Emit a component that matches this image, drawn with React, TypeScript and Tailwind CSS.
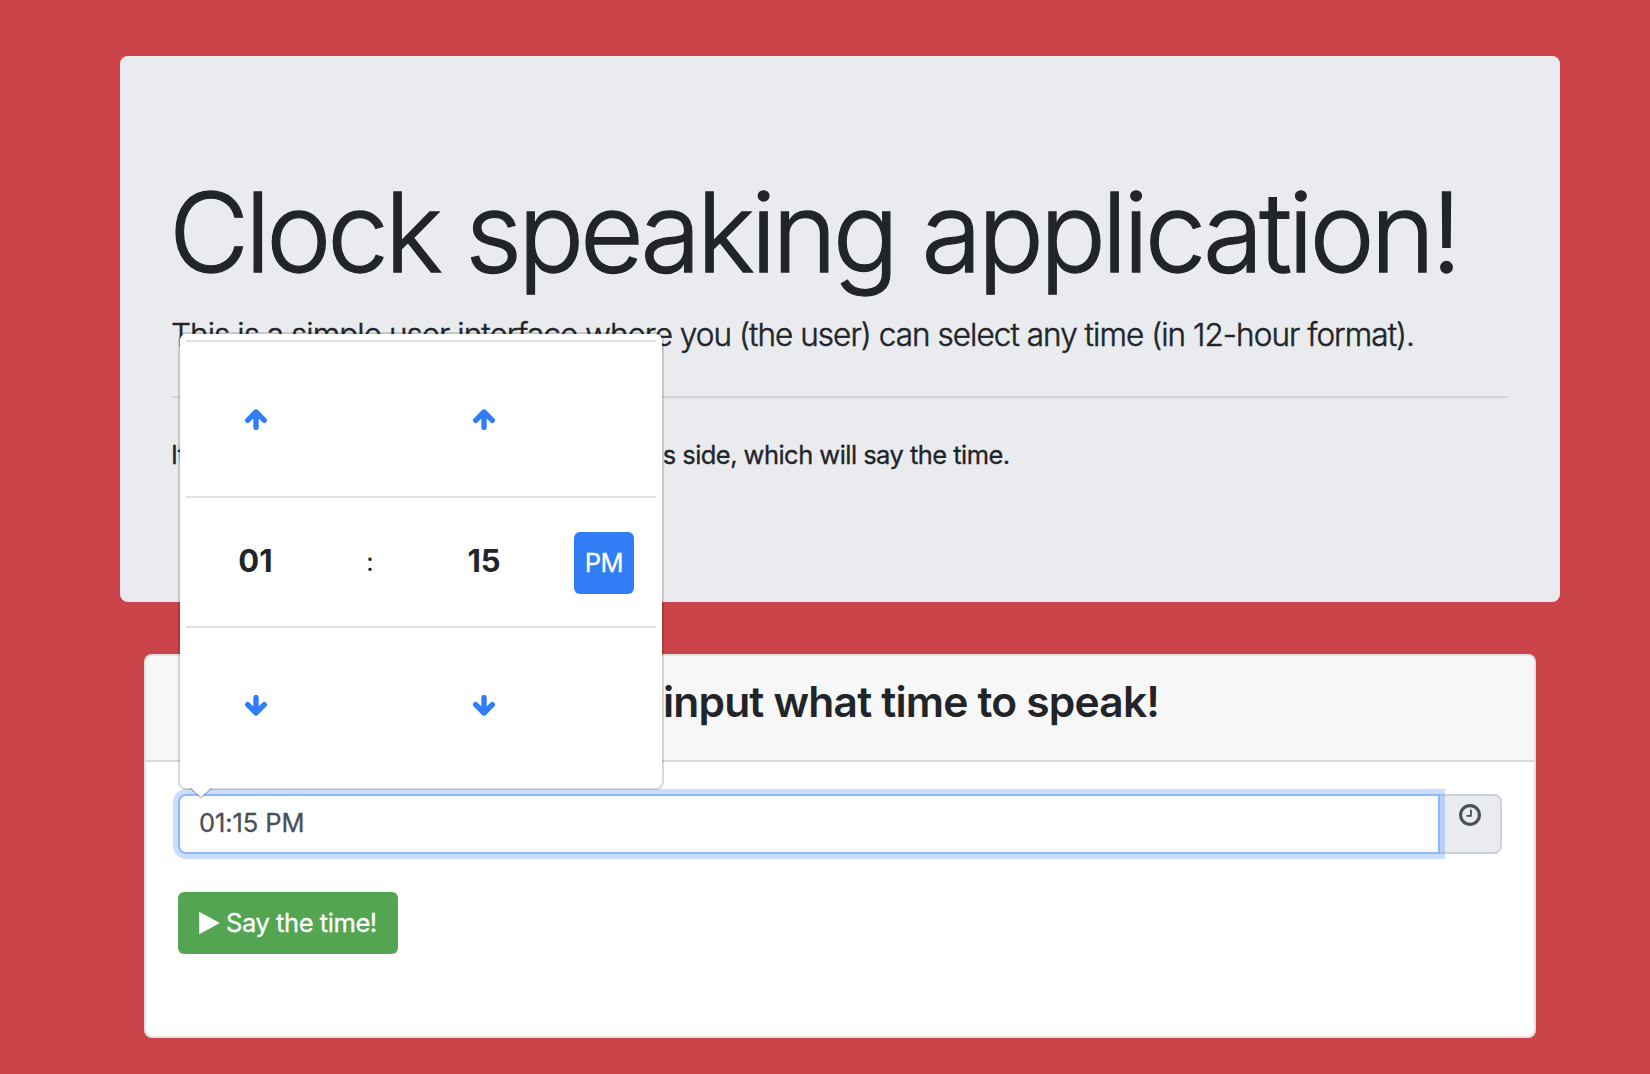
import React from "react";

function ClockIcon() {
  return (
    <svg viewBox="0 128 1536 1536" className="h-[22px] w-[22px] fill-[#495057]" aria-hidden="true">
      <path d="M896 544v448q0 14-9 23t-23 9h-320q-14 0-23-9t-9-23v-64q0-14 9-23t23-9h224v-352q0-14 9-23t23-9h64q14 0 23 9t9 23zm416 352q0-148-73-273t-198-198-273-73-273 73-198 198-73 273 73 273 198 198 273 73 273-73 198-198 73-273zm224 0q0 209-103 385.5t-279.5 279.5-385.5 103-385.5-103-279.5-279.5-103-385.5 103-385.5 279.5-279.5 385.5-103 385.5 103 279.5 279.5 103 385.5z" />
    </svg>
  );
}

function PlayIcon() {
  return (
    <svg viewBox="0 0 21 22" className="h-[22px] w-[21px] fill-white" aria-hidden="true">
      <path d="M0.2 0.7Q0.2 -0.3 1.1 0.2L20 10.5Q20.8 11 20 11.5L1.1 21.8Q0.2 22.3 0.2 21.3Z" />
    </svg>
  );
}

function Arrow({ down = false }: { down?: boolean }) {
  return (
    <svg viewBox="0 0 22 21" className={down ? "mb-[4px] h-[21px] w-[22px] rotate-180" : "h-[21px] w-[22px]"} aria-hidden="true">
      <path d="M2.7 11.3L11 3L19.3 11.3M11 4V18.4" fill="none" stroke="#307df6" strokeWidth="5.4" strokeLinecap="round" strokeLinejoin="round" />
      <path d="M6 8L11 3L16 8L12.5 10H9.5Z" fill="#307df6" />
    </svg>
  );
}

function TimePicker() {
  const row = "grid grid-cols-[139px_90px_138px_103px] items-center justify-items-center border-t-2 border-[#dee2e6]";
  return (
    <div className="absolute bottom-[64px] left-0 z-10 h-[458px] w-[486px] rounded-lg border-2 border-black/15 bg-white bg-clip-padding px-1.5 pt-1.5">
      <div className={`${row} h-[156px]`}>
        <Arrow />
        <span />
        <Arrow />
        <span />
      </div>
      <div className={`${row} h-[130px]`}>
        <span className="pb-px text-[31px] font-bold">01</span>
        <span className="text-[25.5px]">:</span>
        <span className="pb-px text-[31px] font-bold">15</span>
        <button className="mr-[1px] mt-[2px] h-[62px] w-[60px] rounded-md bg-[#307df6] text-[25.5px] tracking-[-0.3px] text-white [-webkit-text-stroke:0.3px]">PM</button>
      </div>
      <div className={`${row} h-[160px]`}>
        <Arrow down />
        <span />
        <Arrow down />
        <span />
      </div>
      <svg viewBox="0 0 24 12" className="absolute -bottom-[12px] left-[9px] h-[12px] w-6" aria-hidden="true">
        <path d="M2 0L12 9.5L22 0Z" fill="#fff" />
        <path d="M1.5 0.3L12 10L22.5 0.3" fill="none" stroke="#000" strokeOpacity="0.25" strokeWidth="1.2" />
      </svg>
    </div>
  );
}

export default function App() {
  return (
    <div className="h-[1074px] w-[1650px] overflow-hidden bg-[#cb444a] pl-[120px] pt-[56px] font-['Inter',sans-serif] text-[#212529]">
      <header className="h-[546px] w-[1440px] rounded-lg bg-[#eaebef] px-[52px] pt-[111px]">
        <h1 className="-ml-[3px] whitespace-nowrap text-[110px] font-light leading-[130px] tracking-[-4.2px] [-webkit-text-stroke:1.3px]">Clock speaking application!</h1>
        <p className="-ml-px mt-[14px] whitespace-nowrap text-[31.5px] font-light leading-[48px] tracking-[-0.96px] [-webkit-text-stroke:0.5px]">
          This is a simple user interface where you (the user) can select any time (in 12-hour format).
        </p>
        <hr className="mt-[37px] border-t-2 border-black/10" />
        <p className="-ml-px mt-[37px] whitespace-nowrap text-[25.5px] leading-[40px] tracking-[-0.54px] [-webkit-text-stroke:0.3px]">
          <span className="[word-spacing:3.4px]">It uses speech synthesis on the browser's</span> side, which will say the time.
        </p>
      </header>

      <main className="ml-6 mt-[52px] h-[384px] w-[1392px] rounded-lg border-2 border-black/12 bg-white bg-clip-border">
        <div className="h-[106px] rounded-t-md border-b-2 border-black/12 bg-[#f7f7f7] pt-[21px] text-center">
          <h2 className="whitespace-nowrap text-[42.5px] font-semibold leading-[50px] tracking-[-0.8px]">Please input what time to speak!</h2>
        </div>
        <div className="px-8 pt-8">
          <div className="relative flex h-[60px] w-[1324px]">
            <div className="z-[1] flex w-[1262px] items-center rounded-l-lg border-2 border-[#8bb9fa] bg-white pb-[2px] pl-[19px] text-[25.5px] tracking-[-0.1px] text-[#495057] shadow-[0_0_0_5px_rgba(48,125,246,0.25)] [-webkit-text-stroke:0.3px]">
              01:15 PM
            </div>
            <div className="-ml-[2px] flex w-16 justify-center rounded-r-lg border-2 border-[#ced2d8] bg-[#eaebef] pt-2">
              <ClockIcon />
            </div>
            <TimePicker />
          </div>
          <button className="mt-[38px] flex h-[62px] w-[220px] items-center gap-[6px] rounded-md bg-[#53a551] pl-[21px] text-[25.5px] tracking-[-0.43px] text-white [-webkit-text-stroke:0.3px]">
            <PlayIcon />
            <span className="whitespace-nowrap">Say the time!</span>
          </button>
        </div>
      </main>
    </div>
  );
}
